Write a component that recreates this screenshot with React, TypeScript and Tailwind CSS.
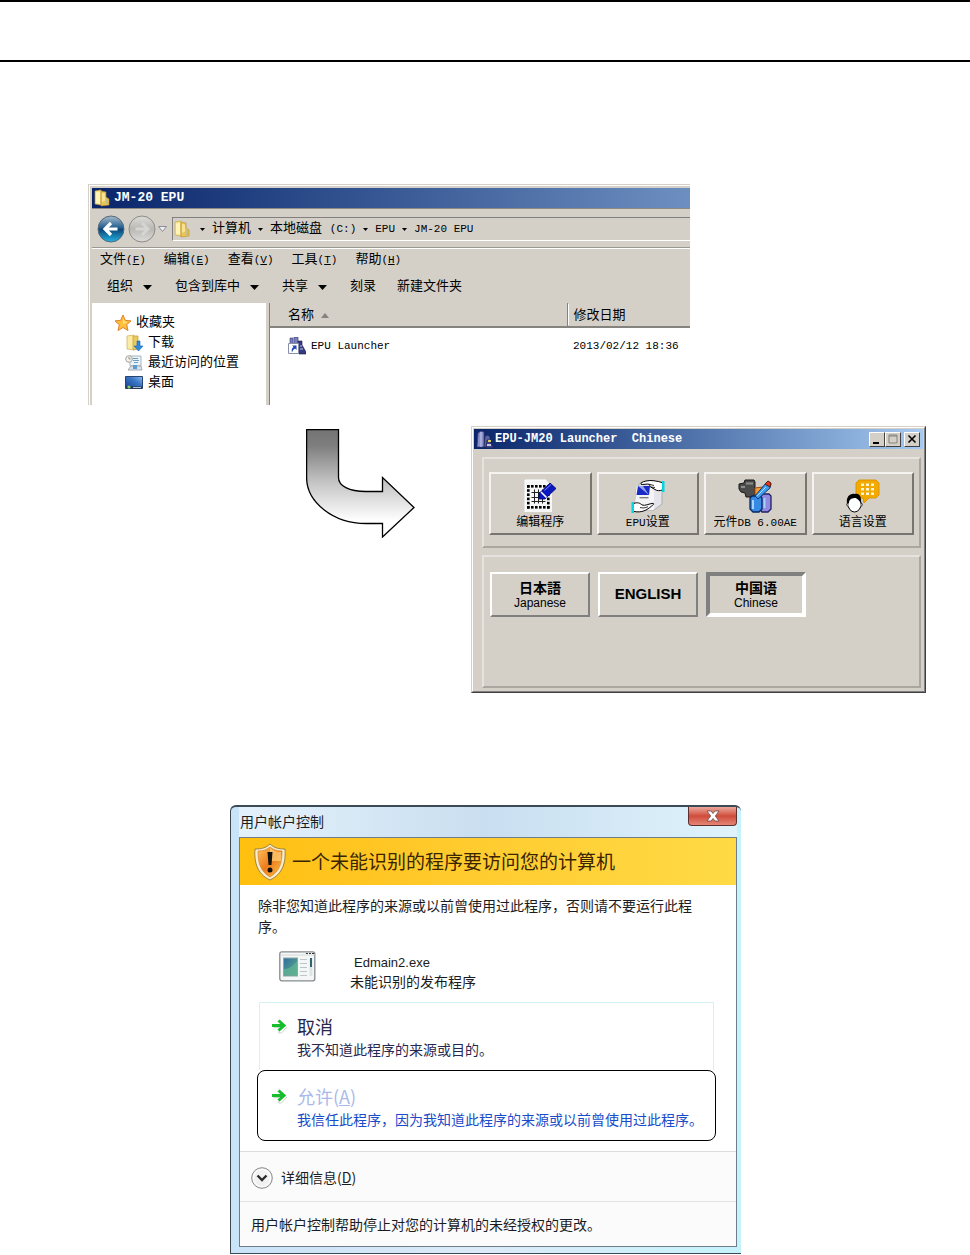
import React from "react";

const SONG = "font-['Liberation_Mono','Noto_Sans_CJK_SC',monospace]";
const HEI = "font-['Noto_Sans_CJK_SC',sans-serif]";

/* Latin text inside Chinese labels, half as wide as a Chinese character. */
function Half({ children }: { children: React.ReactNode }) {
  return <span className="whitespace-pre text-[11px]">{children}</span>;
}

function Caret() {
  return (
    <svg aria-hidden="true" className="shrink-0" width="5" height="3" viewBox="0 0 5 3">
      <path d="M0 0h5L2.5 3z" fill="#000" />
    </svg>
  );
}

function MenuCaret() {
  return (
    <svg aria-hidden="true" width="9" height="5" viewBox="0 0 9 5">
      <path d="M0 0h9L4.500 5z" fill="#000" />
    </svg>
  );
}

function FolderIcon() {
  return (
    <svg aria-hidden="true" className="shrink-0" width="18" height="18" viewBox="0 0 18 18">
      <path d="M2 2l6-1v15l-6-1z" fill="#f6e08a" stroke="#c9a53c" strokeWidth=".6" />
      <path d="M8 2l5 1v5l3 2v6l-8 1z" fill="#e9c456" stroke="#b98f25" strokeWidth=".6" />
      <path d="M3 3.500l4-.8v12l-4-.8z" fill="#fff3b8" />
      <path d="M9 4l3 .6v7L9 13z" fill="#f9e391" />
      <path d="M14 10v5" stroke="#8fb5d8" />
    </svg>
  );
}

function BackIcon() {
  return (
    <svg aria-hidden="true" width="28" height="28" viewBox="0 0 28 28">
      <defs>
        <linearGradient id="backFill" x1="0" y1="0" x2="0" y2="1">
          <stop offset="0" stopColor="#a9bccb" />
          <stop offset=".42" stopColor="#2c6594" />
          <stop offset=".52" stopColor="#0d4679" />
          <stop offset="1" stopColor="#22b5e4" />
        </linearGradient>
      </defs>
      <circle cx="14" cy="14" r="13" fill="url(#backFill)" stroke="#596a77" />
      <path d="M20.500 14H8.500M14 8l-6 6 6 6" fill="none" stroke="#fff" strokeWidth="3.200" />
    </svg>
  );
}

function ForwardIcon() {
  return (
    <svg aria-hidden="true" width="28" height="28" viewBox="0 0 28 28">
      <defs>
        <linearGradient id="forwardFill" x1="0" y1="0" x2="0" y2="1">
          <stop offset="0" stopColor="#dddcd9" />
          <stop offset=".5" stopColor="#b9b8b5" />
          <stop offset="1" stopColor="#dedcd8" />
        </linearGradient>
      </defs>
      <circle cx="14" cy="14" r="13" fill="url(#forwardFill)" stroke="#8b8b89" />
      <path d="M7.500 14h12M14 8l6 6-6 6" fill="none" stroke="#d6d5d2" strokeWidth="3" />
    </svg>
  );
}

function StarIcon() {
  return (
    <svg aria-hidden="true" width="18" height="18" viewBox="0 0 18 18">
      <path d="M9 1l2.300 5.300 5.700.6-4.300 3.800 1.300 5.800L9 13.500l-5 3 1.300-5.800L1 6.900l5.700-.6z" fill="#fdbf3c" stroke="#e5812a" strokeLinejoin="round" />
      <path d="M9 4l1.500 3.500 3 .4L9 10z" fill="#ffe48c" />
    </svg>
  );
}

function DownloadIcon() {
  return (
    <svg aria-hidden="true" width="18" height="18" viewBox="0 0 18 18">
      <path d="M2 2l7-1v15l-7-1z" fill="#fbeba5" stroke="#cfae4b" strokeWidth=".7" />
      <path d="M8 2h5v13l-5 1z" fill="#ecca62" stroke="#c49b35" strokeWidth=".7" />
      <path d="M12 7h3v5h3l-4.500 5L9 12h3z" fill="#2b8be0" stroke="#1763b3" strokeWidth=".6" />
    </svg>
  );
}

function RecentIcon() {
  return (
    <svg aria-hidden="true" width="18" height="18" viewBox="0 0 18 18">
      <path d="M5 2h11v10H5z" fill="#e9f2f8" stroke="#a9b5bd" />
      <path d="M7 4.500h6M8 6.500h6M9 8.500h4" stroke="#6f9ec4" />
      <path d="M6 12h10l1 4H3z" fill="#dce2e6" stroke="#8f9aa3" strokeWidth=".8" />
      <path d="M8 11h4v4H8z" fill="#5a9ccf" />
      <circle cx="4" cy="5" r="3.300" fill="#f4f4ee" stroke="#a5a598" />
      <path d="M4 3v2h1.500" stroke="#777" fill="none" strokeWidth=".8" />
    </svg>
  );
}

function DesktopIcon() {
  return (
    <svg aria-hidden="true" width="18" height="18" viewBox="0 0 18 18">
      <defs>
        <linearGradient id="deskFill" x1="0" y1="1" x2="1" y2="0">
          <stop offset="0" stopColor="#153f8b" />
          <stop offset=".6" stopColor="#3a77c9" />
          <stop offset="1" stopColor="#8ebcf0" />
        </linearGradient>
      </defs>
      <path d="M.5 2.500h17v12H.5z" fill="url(#deskFill)" stroke="#27446f" />
      <path d="M1 12.500h16v2H1z" fill="#2b3444" />
      <circle cx="4" cy="13" r="1.600" fill="#7fd070" />
      <path d="M8 13.500h8" stroke="#a8bdd6" />
    </svg>
  );
}

function TowerIcon() {
  return (
    <svg aria-hidden="true" className="shrink-0" width="17" height="17" viewBox="0 0 17 17">
      <path d="M2 2l3-2 3 1v15H1z" fill="#8a8fc9" stroke="#34366d" strokeWidth=".7" />
      <path d="M5 1v15" stroke="#c5c8ea" />
      <path d="M9 5l3-1 2 2v10H8z" fill="#5c61a3" stroke="#22244f" strokeWidth=".7" />
      <path d="M11 9h2l4 6v2h-7z" fill="#3c4288" stroke="#191b44" strokeWidth=".6" />
      <path d="M12 9h3v2h-3z" fill="#d9d35d" />
      <path d="M11 13h4v2h-4z" fill="#c5c8ea" />
    </svg>
  );
}

function ShortcutIcon() {
  return (
    <svg aria-hidden="true" width="18" height="18" viewBox="0 0 18 18">
      <path d="M2 1h3v6H2zM6 0h4v8H6z" fill="#7b7fbd" stroke="#33356d" strokeWidth=".6" />
      <path d="M10 4h4v4l4 7v2h-7z" fill="#353a83" stroke="#17193f" strokeWidth=".6" />
      <path d="M12 9h2M12 12h3" stroke="#c4c7e8" />
      <path d="M.5 6.500h10v10H.5z" fill="#fff" stroke="#8a8fa8" />
      <path d="M8.500 8.500v4.500l-1.400-1.400C5.500 12.500 4.800 13.600 4 15.500c-1-2.800.2-4.600 1.600-5.500L4.200 8.500z" fill="#1d45b5" />
    </svg>
  );
}

function GridEditIcon() {
  const cells = [0, 1, 2, 3, 4, 5];
  return (
    <svg aria-hidden="true" width="32" height="34" viewBox="0 0 32 34">
      <path d="M1 1h21l6 6v26H1z" fill="#f6f6f6" />
      <path d="M1 33V1h21" fill="none" stroke="#fff" />
      {cells.map((i) => (
        <React.Fragment key={i}>
          <rect x={3 + i * 4} y="6" width="2.600" height="2.600" />
          <rect x={3 + i * 4} y="27" width="2.600" height="2.600" />
          <rect x="3" y={6 + i * 4.200} width="2.600" height="2.600" />
          <rect x="23" y={6 + i * 4.200} width="2.600" height="2.600" />
        </React.Fragment>
      ))}
      <path d="M10.500 10.500v14M14.500 10.500v14M18.500 10.500v14M7.500 13.500h14M7.500 18.500h14M7.500 22.500h14" stroke="#222" />
      <path d="M15 20v-5.500L26 4l6 5.500L21 20z" fill="#0a18c0" stroke="#00006c" strokeWidth=".8" />
      <path d="M17 13l5.500 5.500" stroke="#fff" strokeWidth="1.600" />
      <path d="M20.500 11.500L27 5.500" stroke="#7c88f5" />
    </svg>
  );
}

function HandsIcon() {
  return (
    <svg aria-hidden="true" width="34" height="34" viewBox="0 0 34 34">
      <path d="M5 11l4-7 8-2 14 8v15l-8 6H7l-3-6z" fill="#e4e4ea" stroke="#a2a2a8" strokeWidth=".8" />
      <path d="M5 11l1-4h13l4 5v19H7l-3-6z" fill="#f4f4f7" />
      <path d="M7 7h12l-1 9H5.500z" fill="#1a2ac6" />
      <path d="M7 7l5 0 6 9z" fill="#93a3f2" />
      <path d="M8.500 18.700h9" stroke="#777" strokeWidth="1.300" />
      <path d="M31 3.500C26 2 20 .8 15 2c-4 .8-6 2.500-5 3.300C12 6 16 4.600 18 5.200c1.500.8 0 2.300 2 3l4 2.300c2 1.500 5 1.500 7 .5" fill="#fff" stroke="#000" />
      <path d="M18 5.200l5 1.300M20 8l4 .5" fill="none" stroke="#000" strokeWidth=".8" />
      <path d="M31 2h2.500v11H31z" fill="#00d7df" />
      <path d="M3 24.500c3-1.500 6-.5 8 1.500 3 1.200 7-1.300 11-1.700 1.500.2 0 2-1.500 2.800C16 31 11 34 3 32.500" fill="#fff" stroke="#000" />
      <path d="M9 28.500c3 .8 5 .5 8-.8" fill="none" stroke="#000" strokeWidth=".8" />
      <path d="M.5 23H3v11H.5z" fill="#00d7df" />
    </svg>
  );
}

function PartsIcon() {
  return (
    <svg aria-hidden="true" width="34" height="34" viewBox="0 0 34 34">
      <path d="M1 5l5-1 1-3h9l1 2v12l-2 3H8l-1-4-4-1-2-3z" fill="#4b4b4b" stroke="#171717" />
      <path d="M8 4.500h7M3 8h4" stroke="#8d8d8d" strokeWidth="2" />
      <path d="M17 9l8-1v8h-8z" fill="#f19b37" stroke="#a04c12" />
      <path d="M23 17l2-2h6l2 2v13l-3 3h-6l-2-3z" fill="#918ae0" stroke="#202060" strokeWidth="1.300" />
      <path d="M12 19l2-2h8l2 2v11l-3 3h-6l-3-3z" fill="#368ae4" stroke="#06265c" strokeWidth="1.300" />
      <path d="M15 21v9M26.500 19v10" stroke="#a6d0ff" strokeWidth="2" />
      <path d="M17 17L28 4l3-1 2 2-1 4-12 11z" fill="#3e9cef" stroke="#153a71" />
      <path d="M27 5l3-3 3 2-1 4z" fill="#e33a20" stroke="#5d1a0f" />
      <path d="M19 17l9-9" stroke="#b6e3ff" />
    </svg>
  );
}

function SpeechIcon() {
  return (
    <svg aria-hidden="true" width="34" height="34" viewBox="0 0 34 34">
      <path d="M13 1h17l3 3v12l-3 3h-7l-5 5-1-5h-4l-3-3V4z" fill="#f2a900" stroke="#e09400" />
      <path d="M15 4.500h3v2.500h-3zM20 4.500h3v2.500h-3zM25 4.500h3v2.500h-3zM15 9h3v2.500h-3zM20 9h3v2.500h-3zM25 9h3v2.500h-3zM15 13.500h3v2.500h-3zM20 13.500h3v2.500h-3zM25 13.500h3v2.500h-3z" fill="#fff6da" />
      <ellipse cx="8.500" cy="25" rx="6.500" ry="8" fill="#fff" stroke="#000" />
      <path d="M1 24c-1-6 3-10 8-9 5-1 7 4 5.500 9-1.500-4-4-4-4.500-5-4 0-7 1-7 5z" fill="#000" />
      <path d="M2 24c-2 0-1 4 1 4M15 24c2 0 1 4-1 4" fill="#fff" stroke="#000" />
    </svg>
  );
}

function CurvedArrow() {
  return (
    <svg aria-hidden="true" className="mt-[3px] shrink-0" width="109" height="109" viewBox="0 0 109 109">
      <defs>
        <linearGradient id="arrowFill" x1="0" y1="0" x2="0" y2="1">
          <stop offset="0" stopColor="#747474" />
          <stop offset=".15" stopColor="#7e7e7e" />
          <stop offset=".5" stopColor="#c6c6c6" />
          <stop offset=".85" stopColor="#fff" />
        </linearGradient>
      </defs>
      <path
        d="M.6.6H32.500V48.500C32.500 57 43 62.500 60 62.500H76.500V48.500L108 78.500L76.500 108V94.500H60C27 94.500 .6 73 .6 48.500Z"
        fill="url(#arrowFill)"
        stroke="#000"
        strokeWidth="1.300"
      />
    </svg>
  );
}

function ShieldIcon() {
  return (
    <svg aria-hidden="true" width="32" height="38" viewBox="0 0 32 38">
      <defs>
        <linearGradient id="shieldFill" x1="0" y1="0" x2="1" y2="1">
          <stop offset="0" stopColor="#ffc35d" />
          <stop offset=".5" stopColor="#ee7b1c" />
          <stop offset="1" stopColor="#fbc24a" />
        </linearGradient>
      </defs>
      <path d="M16 1c4 4 9 5 15 5 1 13-2 25-15 31C3 31 0 19 1 6c6 0 11-1 15-5z" fill="#f7edd0" stroke="#9c8040" />
      <path d="M16 4c4 3 7 4 12 4 0 12-2 20-12 26C6 28 4 20 4 8c5 0 8-1 12-4z" fill="url(#shieldFill)" stroke="#d98a22" strokeWidth=".7" />
      <path d="M16 5c4 3 7 4 11 4v9H16z" fill="#ffe08a" opacity=".6" />
      <path d="M13.500 9h5l-1 13h-3z" fill="#101010" />
      <circle cx="16" cy="27" r="2.500" fill="#101010" />
    </svg>
  );
}

function ProgramIcon() {
  return (
    <svg aria-hidden="true" className="shrink-0" width="37" height="31" viewBox="0 0 37 31">
      <defs>
        <linearGradient id="programFill" x1="0" y1="0" x2="1" y2="1">
          <stop offset="0" stopColor="#316f9f" />
          <stop offset="1" stopColor="#5dae86" />
        </linearGradient>
      </defs>
      <rect x=".8" y=".8" width="35" height="29" rx="2" fill="#f5f7f7" stroke="#858b8d" strokeWidth="1.300" />
      <path d="M1.500 4h34" stroke="#d4d8da" />
      <path d="M27 2.500h2M30 2.500h2M33 2.500h2" stroke="#333" />
      <rect x="4.500" y="7" width="14" height="18" fill="url(#programFill)" stroke="#8eaaa7" />
      <path d="M5 18c5 0 9-3 13-8v14H5z" fill="#62b793" opacity=".7" />
      <path d="M21 8.500h7M21 12.500h7M21 16.500h7M21 20.500h7M21 24.500h7" stroke="#bcc5c8" />
      <path d="M30.500 7h3v18h-3z" fill="#dce4e5" />
      <path d="M31 7h2v9h-2z" fill="#2f6572" />
    </svg>
  );
}

function GreenArrow() {
  return (
    <svg aria-hidden="true" className="mt-1 shrink-0" width="16" height="16" viewBox="0 0 16 16">
      <path d="M2.500 9.500h7l-2 5.500h3l5.500-6" fill="none" stroke="#c9d6c9" />
      <path d="M1 7.500h12M7.500 2.500l5.500 5-5.500 5" fill="none" stroke="#16bd2c" strokeWidth="3" />
    </svg>
  );
}

function ExplorerWindow() {
  const menus = [
    ["文件", "F"],
    ["编辑", "E"],
    ["查看", "V"],
    ["工具", "T"],
    ["帮助", "H"],
  ];
  return (
    <section className={`ml-[88px] max-w-[602px] border-l border-t border-[#d4d0c8] bg-[#d4d0c8] text-[13px] text-black ${SONG}`}>
      <div className="border-l border-t border-white pl-[2px] pt-[2px]">
        <header className="flex h-5 items-center gap-[3px] bg-linear-to-r from-[#0a246a] to-[#6d8fc0] pl-[1px] text-white">
          <FolderIcon />
          <h2 className="font-bold">JM-20 EPU</h2>
        </header>

        <div className="flex h-10 items-center border-b border-t border-b-[#9b9892] border-t-[#8c8a85] pl-[5px] pt-[2px]">
          <button aria-label="后退" className="mr-[3px]"><BackIcon /></button>
          <button aria-label="前进"><ForwardIcon /></button>
          <button aria-label="历史" className="ml-[2px] mr-[5px]">
            <svg aria-hidden="true" width="9" height="6" viewBox="0 0 9 6">
              <path d="M.5.5h8l-4 5z" fill="#eee" stroke="#8c8a9b" />
            </svg>
          </button>
          <nav aria-label="地址" className="flex h-6 flex-1 items-center border-b border-l border-t border-b-white border-l-[#808080] border-t-[#808080]">
            <FolderIcon />
            <span className="ml-[9px] flex items-center gap-[7px]">
              <Caret />
              <a href="#computer">计算机</a>
              <Caret />
              <a href="#c">本地磁盘 <Half>(C:)</Half></a>
              <Caret />
              <a href="#epu"><Half>EPU</Half></a>
              <Caret />
              <a href="#jm20"><Half>JM-20 EPU</Half></a>
            </span>
          </nav>
        </div>

        <div className="flex h-[21px] items-center gap-[18px] border-t border-white pl-2 pt-[2px]">
          {menus.map(([name, key]) => (
            <button key={key} className="whitespace-nowrap">
              {name}
              <Half>(<u>{key}</u>)</Half>
            </button>
          ))}
        </div>

        <div className="flex h-[34px] items-center pl-[15px] pt-[2px]">
          <button className="mr-[23px] flex items-center gap-[10px]">组织<MenuCaret /></button>
          <button className="mr-[23px] flex items-center gap-[10px]">包含到库中<MenuCaret /></button>
          <button className="mr-[23px] flex items-center gap-[10px]">共享<MenuCaret /></button>
          <button className="mr-[21px]">刻录</button>
          <button>新建文件夹</button>
        </div>

        <div className="flex">
          <nav aria-label="收藏夹" className="w-[174px] shrink-0 bg-white pb-3 pl-[22px] pt-[10px]">
            <a href="#favorites" className="flex h-5 items-center gap-1"><StarIcon />收藏夹</a>
            <ul className="pl-[11px]">
              <li><a href="#downloads" className="flex h-5 items-center gap-[5px]"><DownloadIcon />下载</a></li>
              <li><a href="#recent" className="flex h-5 items-center gap-[5px]"><RecentIcon />最近访问的位置</a></li>
              <li><a href="#desktop" className="flex h-5 items-center gap-[5px]"><DesktopIcon />桌面</a></li>
            </ul>
          </nav>
          <div className="ml-[3px] flex-1 border-l border-[#808080] bg-white">
            <table className="w-full border-collapse text-left">
              <thead>
                <tr className="h-6 border-b-2 border-[#85837e] bg-[#d4d0c8]">
                  <th scope="col" className="border-r border-[#85837e] p-0 pl-[18px] pt-[2px] font-normal">
                    <span className="flex items-center gap-[7px]">
                      名称
                      <svg aria-hidden="true" width="8" height="5" viewBox="0 0 8 5">
                        <path d="M4 0l4 5H0z" fill="#85837e" />
                      </svg>
                    </span>
                  </th>
                  <th scope="col" className="w-[123px] p-0 font-normal">
                    <span className="block border-l border-white pl-[5px] pt-[2px]">修改日期</span>
                  </th>
                </tr>
              </thead>
              <tbody>
                <tr>
                  <td className="p-0 pl-[18px] pt-2">
                    <span className="flex h-5 items-center gap-[5px]"><ShortcutIcon /><Half>EPU Launcher</Half></span>
                  </td>
                  <td className="p-0 pl-[6px] pt-2">
                    <span className="flex h-5 items-center"><Half>2013/02/12 18:36</Half></span>
                  </td>
                </tr>
              </tbody>
            </table>
          </div>
        </div>
      </div>
    </section>
  );
}

const RAISED = "border-2 border-b-[#77756f] border-l-[#f4f3f0] border-r-[#77756f] border-t-[#f4f3f0]";
const GROUP = "border-2 border-b-[#aaa7a1] border-l-[#e6e3de] border-r-[#aaa7a1] border-t-[#e6e3de]";
const CAPTION = "flex h-[15px] w-4 items-center justify-center border border-b-[#404040] border-l-white border-r-[#404040] border-t-white bg-[#d4d0c8]";

function LaunchButton({ icon, children }: { icon: React.ReactNode; children: React.ReactNode }) {
  return (
    <button className={`flex h-[63px] flex-col items-center whitespace-nowrap pt-[5px] text-[12px] leading-5 ${RAISED}`}>
      {icon}
      <span>{children}</span>
    </button>
  );
}

function LauncherWindow() {
  return (
    <section className={`min-w-0 max-w-[455px] flex-1 border border-b-[#404040] border-l-[#d4d0c8] border-r-[#404040] border-t-[#d4d0c8] bg-[#d4d0c8] text-black ${SONG}`}>
      <div className="border border-b-[#808080] border-l-white border-r-[#808080] border-t-white p-px pb-[3px]">
        <header className="flex h-5 items-center bg-linear-to-r from-[#0a246a] to-[#a6caf0] pl-[2px] pr-[3px] text-white">
          <TowerIcon />
          <h2 className="ml-[2px] flex-1 whitespace-pre text-[12px] font-bold">EPU-JM20 Launcher  Chinese</h2>
          <button aria-label="最小化" className={CAPTION}>
            <svg aria-hidden="true" width="10" height="10" viewBox="0 0 10 10"><path d="M1 8h6v2H1z" /></svg>
          </button>
          <button aria-label="最大化" className={CAPTION} disabled>
            <svg aria-hidden="true" width="10" height="10" viewBox="0 0 10 10"><path d="M1 1h8v8H1zM1 2h8" fill="none" stroke="#85837e" /></svg>
          </button>
          <button aria-label="关闭" className={`ml-[3px] ${CAPTION}`}>
            <svg aria-hidden="true" width="10" height="10" viewBox="0 0 10 10"><path d="M1.500 1.500l7 7M8.500 1.500l-7 7" stroke="#000" strokeWidth="1.600" /></svg>
          </button>
        </header>

        <div className={`ml-2 mr-[2px] mt-2 grid grid-cols-4 gap-[5px] px-[5px] pb-[11px] pt-[13px] ${GROUP}`}>
          <LaunchButton icon={<GridEditIcon />}>编辑程序</LaunchButton>
          <LaunchButton icon={<HandsIcon />}><Half>EPU</Half>设置</LaunchButton>
          <LaunchButton icon={<PartsIcon />}>元件<Half>DB 6.00AE</Half></LaunchButton>
          <LaunchButton icon={<SpeechIcon />}>语言设置</LaunchButton>
        </div>

        <div className={`ml-2 mr-[2px] mt-[7px] flex gap-2 px-[6px] pb-[69px] pt-[15px] font-['Liberation_Sans','Noto_Sans_CJK_JP',sans-serif] ${GROUP}`}>
          <button className="flex h-[45px] w-[100px] flex-col items-center justify-center border-2 border-b-[#808080] border-l-white border-r-[#808080] border-t-white">
            <b className="text-[14px] leading-4">日本語</b>
            <span className="text-[12px] leading-[14px]">Japanese</span>
          </button>
          <button className="flex h-[45px] w-[100px] items-center justify-center border-2 border-b-[#808080] border-l-white border-r-[#808080] border-t-white text-[15px] font-bold">
            ENGLISH
          </button>
          <button aria-pressed="true" className="flex h-[45px] w-[100px] flex-col items-center justify-center border-4 border-b-white border-l-[#808080] border-r-white border-t-[#808080]">
            <b className="font-['Liberation_Sans','Noto_Sans_CJK_SC',sans-serif] text-[14px] leading-4">中国语</b>
            <span className="text-[12px] leading-[14px]">Chinese</span>
          </button>
        </div>
      </div>
    </section>
  );
}

function AccountControlDialog() {
  return (
    <section
      role="dialog"
      aria-labelledby="uac-title"
      className={`ml-[230px] mt-28 max-w-[511px] rounded-t-md border-l border-t-2 border-b border-[#3c4a56] bg-linear-to-r from-[#c9e3f7] via-[#dcebf8] to-[#c5f3fb] pb-[6px] pl-2 pr-1 text-[14px] text-[#1b1b22] ${HEI}`}
    >
      <header className="flex h-[30px] items-start justify-between bg-linear-to-r from-[#e3f1fb] via-[#c9def0] to-[#dff3fc]">
        <h2 id="uac-title" className="pl-px leading-7">用户帐户控制</h2>
        <button aria-label="关闭" className="flex h-[19px] w-[49px] items-center justify-center rounded-b border border-t-0 border-[#5f2f30] bg-linear-to-b from-[#e9a79b] via-[#cf4b3b] to-[#e58576]">
          <svg aria-hidden="true" width="14" height="12" viewBox="0 0 14 12">
            <path d="M1 1h4l2 2.500L9 1h4L9.300 6l3.700 5H9L7 8.500 5 11H1l3.700-5z" fill="#fff" stroke="#6b4a4c" strokeWidth=".8" />
          </svg>
        </button>
      </header>

      <div className="border border-[#6e7d89] bg-white">
        <div className="flex h-[47px] items-center gap-[6px] bg-linear-to-r from-[#ffbf0d] to-[#ffda45] pl-[14px]">
          <ShieldIcon />
          <h3 className="text-[19px] text-[#3a2503]">一个未能识别的程序要访问您的计算机</h3>
        </div>

        <p className="pl-[18px] pr-9 pt-[10px] leading-[21px]">
          除非您知道此程序的来源或以前曾使用过此程序，否则请不要运行此程序。
        </p>

        <div className="mt-[14px] flex pl-[39px] leading-5">
          <ProgramIcon />
          <div className="ml-[34px]">
            <p className="h-5 pl-1 pt-[2px] font-['Liberation_Sans',sans-serif] text-[13px]">Edmain2.exe</p>
            <p>未能识别的发布程序</p>
          </div>
        </div>

        <div className="mb-[10px] ml-[17px] mr-5 mt-[11px]">
          <div className="mx-[2px]">
            <button className="flex w-full gap-[10px] border border-b-0 border-[#d3f3f5] pb-[10px] pl-[11px] pt-[11px] text-left text-[#28284e]">
              <GreenArrow />
              <span>
                <span className="block text-[18px] leading-6">取消</span>
                <span className="block leading-[22px]">我不知道此程序的来源或目的。</span>
              </span>
            </button>
          </div>
          <button className="flex w-full gap-[10px] rounded-lg border border-black pb-[10px] pl-[13px] pt-[13px] text-left">
            <GreenArrow />
            <span>
              <span className="block text-[18px] leading-6 text-[#a9b9ea]">允许(<u>A</u>)</span>
              <span className="block leading-[22px] text-[#1a4bc8]">我信任此程序，因为我知道此程序的来源或以前曾使用过此程序。</span>
            </span>
          </button>
        </div>

        <div className="border-t border-[#dcdcdc] bg-[#fbfbfb] pl-[11px]">
          <button className="flex h-[49px] items-center gap-2 pt-[2px]">
            <svg aria-hidden="true" width="22" height="22" viewBox="0 0 22 22">
              <circle cx="11" cy="11" r="10.300" fill="#f1f1f1" stroke="#8b8b8b" />
              <circle cx="11" cy="11" r="8.500" fill="none" stroke="#fff" />
              <path d="M6.500 8.500l4.500 4.500 4.500-4.500" fill="none" stroke="#2b2b2b" strokeWidth="2.400" />
            </svg>
            <span>详细信息(<u>D</u>)</span>
          </button>
        </div>
        <p className="border-t border-[#e4e4e4] bg-[#fbfbfb] pl-[11px] leading-[44px]">用户帐户控制帮助停止对您的计算机的未经授权的更改。</p>
      </div>
    </section>
  );
}

export default function App() {
  return (
    <main className="min-h-screen bg-white">
      <div className="mb-[122px] h-[62px] border-y-2 border-black" />
      <ExplorerWindow />
      <div className="mt-[21px] flex items-start gap-14 pl-[306px]">
        <CurvedArrow />
        <LauncherWindow />
      </div>
      <AccountControlDialog />
    </main>
  );
}
